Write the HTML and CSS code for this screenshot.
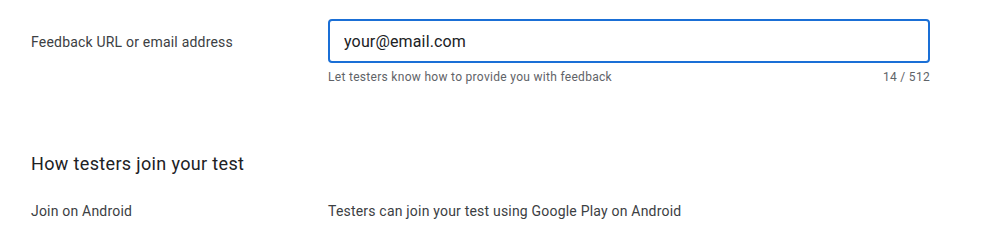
FILE: index.html
```html
<!DOCTYPE html>
<html lang="en">
<head>
	<meta charset="UTF-8">
	<title>Testing details</title>
	<link rel="stylesheet" href="styles.css">
</head>
<body>

<div class="form-row">
	<div class="row-label">Feedback URL or email address</div>
	<div class="field">
		<div class="input-box">
			<input class="text-input" type="text" value="your@email.com">
		</div>
		<div class="hint-line">
			<span>Let testers know how to provide you with feedback</span>
			<span>14 / 512</span>
		</div>
	</div>
</div>

<h2 class="section-title">How testers join your test</h2>

<div class="info-row">
	<div class="row-label">Join on Android</div>
	<div class="row-value">Testers can join your test using Google Play on Android</div>
</div>

</body>
</html>
```

FILE: styles.css
```css
:root {
	--color-text: #202124;
	--color-label: #3c4043;
	--color-hint: #5f6368;
	--color-focus: #1a6fd6;
	font-family: Roboto, Arial, sans-serif;
}
body {
	margin: 0;
	padding: 19px 0 0 31px;
	background: #fff;
	color: var(--color-text);
}

.form-row, .info-row {
	display: grid;
	grid-template-columns: 297px 602px;
}
.row-label {
	font-size: 14px;
	letter-spacing: 0.2px;
	color: var(--color-label);
	line-height: 20px;
}
.form-row .row-label {
	padding-top: 13px;
}

.input-box {
	height: 44px;
	box-sizing: border-box;
	border: 2px solid var(--color-focus);
	border-radius: 4px;
	display: flex;
	align-items: center;
	padding: 0 14px;
}
.text-input {
	border: 0;
	outline: none;
	padding: 0;
	width: 100%;
	font-family: inherit;
	font-size: 16px;
	letter-spacing: 0.15px;
	color: var(--color-text);
	background: transparent;
}
.hint-line {
	display: flex;
	justify-content: space-between;
	font-size: 12px;
	letter-spacing: 0.3px;
	line-height: 16px;
	color: var(--color-hint);
	padding-top: 6px;
}

.section-title {
	margin: 67px 0 0;
	font-size: 18px;
	font-weight: 400;
	letter-spacing: 0.35px;
	line-height: 24px;
	color: var(--color-text);
}

.info-row {
	margin-top: 25px;
}
.row-value {
	font-size: 14px;
	letter-spacing: 0.2px;
	line-height: 20px;
	color: var(--color-label);
}
```
